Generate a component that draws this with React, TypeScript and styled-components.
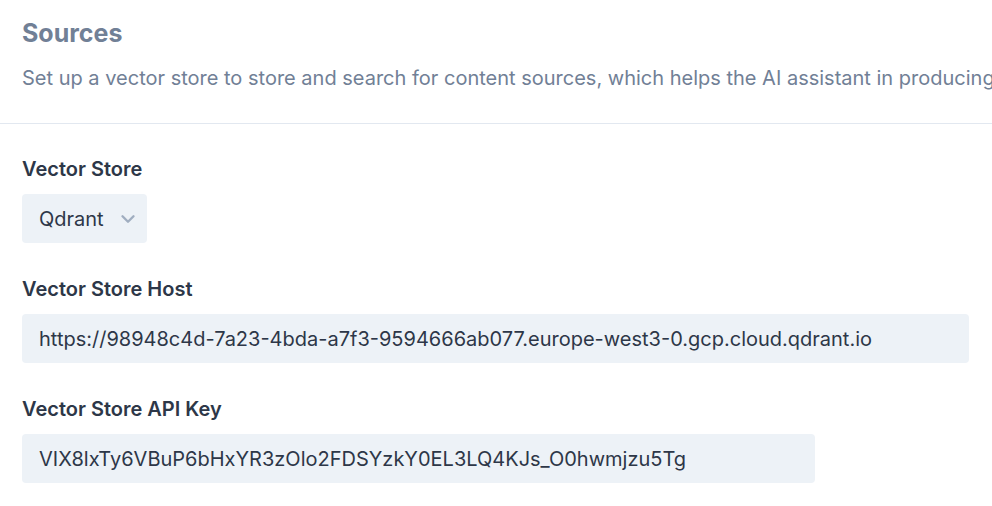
import styled, { createGlobalStyle } from 'styled-components'

const GlobalStyle = createGlobalStyle`
  body {
    margin: 0;
    background: #ffffff;
    font-family: Inter, "Noto Sans", sans-serif;
    overflow: hidden;
  }
`

const Page = styled.div`
  width: 100%;
  overflow: hidden;
`

const Header = styled.header`
  padding: 17px 0 31px 22px;
  border-bottom: 1px solid #e2e8f0;
`

const Title = styled.h1`
  margin: 0 0 15px;
  font-size: 25px;
  line-height: 32px;
  font-weight: 700;
  color: #718096;
`

const Description = styled.p`
  margin: 0;
  font-size: 20px;
  line-height: 28px;
  color: #718096;
  white-space: nowrap;
  overflow: hidden;
`

const Form = styled.div`
  padding: 33px 23px 0 22px;
  display: flex;
  flex-direction: column;
  gap: 34px;
`

const Field = styled.div`
  display: flex;
  flex-direction: column;
  gap: 13px;
`

const Label = styled.label`
  font-size: 20px;
  line-height: 24px;
  font-weight: 600;
  color: #2d3748;
`

const SelectWrap = styled.div`
  position: relative;
  width: 125px;
`

const Select = styled.select`
  appearance: none;
  width: 100%;
  height: 49px;
  padding: 0 36px 0 17px;
  border: none;
  border-radius: 4px;
  background: #edf2f7;
  font-family: inherit;
  font-size: 20px;
  color: #2d3748;
  outline: none;
`

const Chevron = styled.svg`
  position: absolute;
  right: 8px;
  top: 50%;
  transform: translateY(-50%);
  pointer-events: none;
`

const Input = styled.input<{ $width?: string }>`
  box-sizing: border-box;
  width: ${p => p.$width ?? '100%'};
  height: 49px;
  padding: 0 17px;
  border: none;
  border-radius: 4px;
  background: #edf2f7;
  font-family: inherit;
  font-size: 20px;
  color: #2d3748;
  outline: none;
`

export default function App() {
  return (
    <Page>
      <GlobalStyle />
      <Header>
        <Title>Sources</Title>
        <Description>
          Set up a vector store to store and search for content sources, which helps the AI assistant in producing more accurate answers.
        </Description>
      </Header>
      <Form>
        <Field>
          <Label>Vector Store</Label>
          <SelectWrap>
            <Select defaultValue="qdrant">
              <option value="qdrant">Qdrant</option>
              <option value="pinecone">Pinecone</option>
            </Select>
            <Chevron width="22" height="22" viewBox="0 0 24 24" fill="none" stroke="#a0aec0" strokeWidth="2.6" strokeLinecap="round" strokeLinejoin="round">
              <path d="M6 9l6 6 6-6" />
            </Chevron>
          </SelectWrap>
        </Field>
        <Field>
          <Label>Vector Store Host</Label>
          <Input defaultValue="https://98948c4d-7a23-4bda-a7f3-9594666ab077.europe-west3-0.gcp.cloud.qdrant.io" />
        </Field>
        <Field>
          <Label>Vector Store API Key</Label>
          <Input $width="793px" defaultValue="VIX8lxTy6VBuP6bHxYR3zOlo2FDSYzkY0EL3LQ4KJs_O0hwmjzu5Tg" />
        </Field>
      </Form>
    </Page>
  )
}
